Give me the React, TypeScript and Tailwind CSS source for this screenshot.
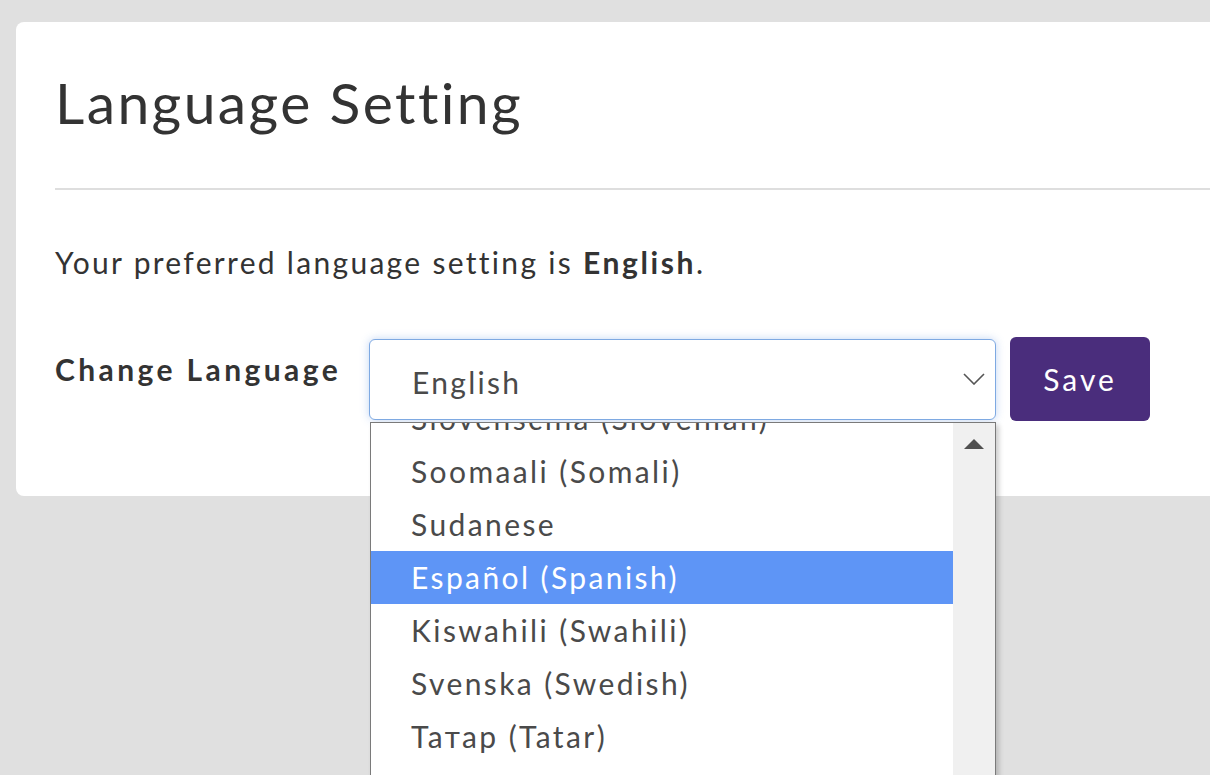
import React from "react";

const options = [
  "Slovenščina (Slovenian)",
  "Soomaali (Somali)",
  "Sudanese",
  "Español (Spanish)",
  "Kiswahili (Swahili)",
  "Svenska (Swedish)",
  "Татар (Tatar)",
];

export default function App() {
  return (
    <div
      className="h-[775px] w-full overflow-hidden bg-[#e0e0e0] pt-[22px] pl-[16px] text-[#333333]"
      style={{ fontFamily: "Lato, 'Open Sans', sans-serif" }}
    >
      <div className="w-[1400px] h-[474px] rounded-lg bg-white pl-[39px] pt-[45px]">
        {/* Title */}
        <h1 className="text-[57px] leading-[70px] font-normal tracking-[2.4px]">Language Setting</h1>
        <div className="mt-[51px] h-[2px] bg-[#dedede]" />

        {/* Current setting */}
        <p className="mt-[52px] text-[30px] leading-[40px] tracking-[2.3px]">
          Your preferred language setting is{" "}
          <span className="font-bold tracking-[2.6px]">English</span>.
        </p>

        {/* Change row */}
        <div className="mt-[55px] flex items-center">
          <label className="-mt-[20px] w-[314px] text-[30px] font-bold leading-[40px] tracking-[3.4px]">
            Change Language
          </label>
          <div className="relative">
            <div className="flex h-[81px] w-[627px] items-center justify-between rounded-md border border-[#7ea9e2] bg-white pl-[42px] pr-[10px] shadow-[0_0_8px_rgba(120,165,230,0.45)]">
              <span className="mt-[6px] text-[30px] tracking-[2.3px] text-[#4a4a4a]">English</span>
              <svg width="22" height="12" viewBox="0 0 22 12" fill="none">
                <path d="M1 1l10 10L21 1" stroke="#555" strokeWidth="1.6" />
              </svg>
            </div>

            {/* Open dropdown list */}
            <div className="absolute left-[1px] top-[83px] z-10 flex h-[400px] w-[626px] overflow-hidden border border-[#7a7a7a] bg-white shadow-[3px_3px_5px_rgba(0,0,0,0.2)]">
              <ul className="flex-1 -mt-[31px]">
                {options.map((o) => (
                  <li
                    key={o}
                    className={`h-[53px] pl-[40px] text-[30px] leading-[53px] tracking-[2.4px] ${
                      o.startsWith("Español") ? "bg-[#5e95f6] text-white" : "text-[#4a4a4a]"
                    }`}
                  >
                    {o}
                  </li>
                ))}
              </ul>
              <div className="flex w-[42px] justify-center bg-[#f0f0f0] pt-[16px]">
                <svg width="20" height="10" viewBox="0 0 20 10">
                  <path d="M10 0L20 10H0z" fill="#505050" />
                </svg>
              </div>
            </div>
          </div>
          <button className="ml-[14px] h-[84px] w-[140px] rounded-md bg-[#4a2d7c] text-[30px] tracking-[3px] text-white">
            Save
          </button>
        </div>
      </div>
    </div>
  );
}
